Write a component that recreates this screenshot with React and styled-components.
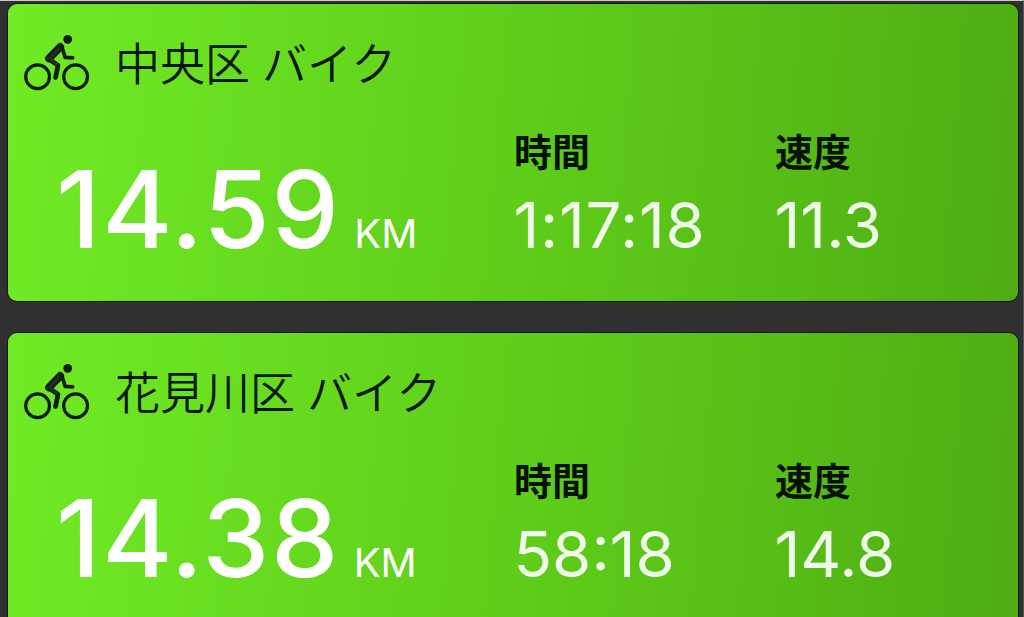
import React from "react";
import styled, { createGlobalStyle } from "styled-components";

const rides = [
    { id: 1, title: '中央区 バイク', distance: '14.59', time: '1:17:18', speed: '11.3', timeSpacing: '0.7px' },
    { id: 2, title: '花見川区 バイク', distance: '14.38', time: '58:18', speed: '14.8', timeSpacing: '0' },
];

function BikeIcon() {
  return (
    <Icon viewBox="0 0 66 58">
        <g fill="none" stroke="#0b1a05" strokeWidth="3.2">
            <circle cx="13.6" cy="42.8" r="11.9" />
            <circle cx="51.6" cy="42.8" r="11.9" />
        </g>
        <circle cx="43.7" cy="5.3" r="4.4" fill="#10200b" />
        <g fill="none" stroke="#10200b" strokeLinecap="round" strokeLinejoin="round">
            <path d="M36.2 13 L25 24.4" strokeWidth="7.8" />
            <path d="M25 25 L34 31.4 L31.6 43.4" strokeWidth="4.8" />
            <path d="M37.6 12 L41.2 23.4 L48.6 23.9" strokeWidth="3.7" />
        </g>
        <path d="M35.8 13.4 L25.4 24.2 L33.4 31" fill="none" stroke="#2a2c2c" strokeWidth="2.6" />
    </Icon>
  )
}

function RideCard({ ride }) {
  return (
    <Card>
        <Header>
            <BikeIcon />
            <Title>{ride.title}</Title>
        </Header>
        <Stats>
            <Distance>
                {ride.distance}
                <Unit>KM</Unit>
            </Distance>
            <Stat>
                <Label>時間</Label>
                <Value $spacing={ride.timeSpacing}>{ride.time}</Value>
            </Stat>
            <Stat>
                <Label>速度</Label>
                <Value>{ride.speed}</Value>
            </Stat>
        </Stats>
    </Card>
  )
}

function App() {
  return (
    <Page>
        <GlobalStyle />
        {rides.map((ride) => (
            <RideCard key={ride.id} ride={ride} />
        ))}
    </Page>
  )
}

const GlobalStyle = createGlobalStyle`
    * {
        box-sizing: border-box;
    }

    body {
        margin: 0;
        background: #303030;
        overflow: hidden;
    }
`;

const Page = styled.main`
    height: 617px;
    padding: 3px 5px 0 8px;
    display: flex;
    flex-direction: column;
    gap: 32px;
    overflow: hidden;
    background: #303030;
    border-top: 1px solid #c9d0cc;
    border-right: 1px solid #55585a;
    font-family: Inter, "Noto Sans CJK JP", sans-serif;
`;

const Card = styled.article`
    flex: none;
    height: 297px;
    border-radius: 9px;
    background: linear-gradient(95deg, #70eb25 0%, #5fce1a 50%, #4ead13 100%);
    box-shadow: 0 0 0 1px #141b10;
`;

const Header = styled.header`
    display: flex;
    align-items: center;
    height: 118px;
    padding-left: 16px;
`;

const Icon = styled.svg`
    width: 66px;
    height: 58px;
    flex: none;
`;

const Title = styled.h2`
    margin: -2px 0 0 25px;
    color: #061702;
    font-family: "Noto Sans CJK JP", sans-serif;
    font-size: 45px;
    font-weight: 350;
    line-height: 64px;
    word-spacing: 2px;
    white-space: nowrap;
`;

const Stats = styled.div`
    display: grid;
    grid-template-columns: 506px 261px 1fr;
`;

const Distance = styled.div`
    padding-left: 48px;
    color: #fff;
    font-size: 107px;
    font-weight: 500;
    line-height: 174px;
    letter-spacing: 1.8px;
    white-space: nowrap;
`;

const Unit = styled.span`
    margin-left: 13.5px;
    font-size: 40px;
    font-weight: 400;
    letter-spacing: 0;
`;

const Stat = styled.div`
    display: flex;
    flex-direction: column;
`;

const Label = styled.span`
    height: 57px;
    color: #061102;
    font-family: "Noto Sans CJK JP", sans-serif;
    font-size: 38px;
    font-weight: 700;
    line-height: 55px;
`;

const Value = styled.span`
    margin-left: -0.5px;
    color: #f0fae8;
    font-size: 63.5px;
    font-weight: 400;
    line-height: 92px;
    letter-spacing: ${(props) => props.$spacing || '0'};
    white-space: nowrap;
`;

export default App
